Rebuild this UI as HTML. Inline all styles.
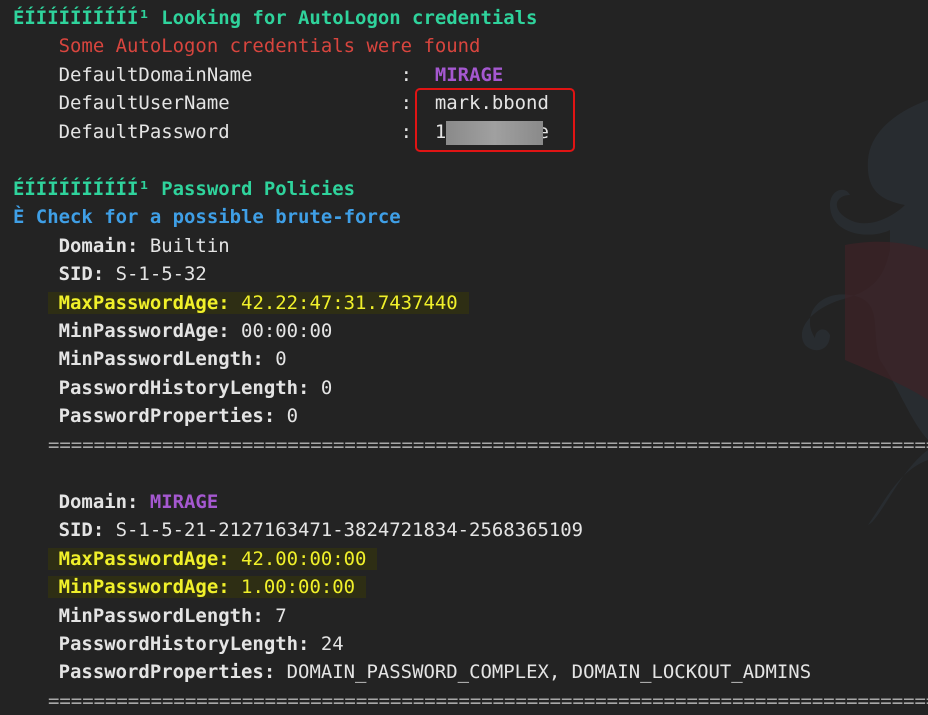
<!DOCTYPE html>
<html><head><meta charset="utf-8"><style>
html,body{margin:0;padding:0;background:#232323;width:928px;height:715px;overflow:hidden;position:relative}
.t{position:absolute;left:13px;top:4px;font-family:"DejaVu Sans Mono","Liberation Mono",monospace;font-size:18.95px;line-height:28.45px;color:#e4e4e4;white-space:pre;z-index:2}
.g{color:#2fd39c;font-weight:bold}
.r{color:#d8453e}
.p{color:#a558d0}
.b{color:#3f9fe6;font-weight:bold}
.w{font-weight:bold}
.y{color:#f0f02a}
.hl{background:#2e2e14;margin-left:-11px;padding:0 11px}
.eq{color:#a8a8a8;display:block;width:880px;overflow:hidden;margin-left:35px;letter-spacing:0}
</style></head><body>
<svg style="position:absolute;left:0;top:0;z-index:1" width="928" height="715">
<path d="M928 100 C900 110 870 130 868 160 C866 190 880 200 905 205 C895 215 870 230 850 220 C830 210 835 195 850 195 C845 185 830 190 830 205 C830 235 870 240 890 230 L890 250 C885 270 880 290 840 300 C810 310 795 330 805 345 C815 355 830 350 830 335 C825 325 815 330 815 338 C800 315 820 290 850 295 C885 300 870 330 880 360 C900 390 910 420 928 440 Z" fill="#35404a" opacity="0.35"/>
<path d="M845 245 C870 240 900 240 928 250 L928 400 C905 385 880 375 845 360 Z" fill="#3e2226" opacity="0.7"/>
<path d="M928 450 C900 470 880 520 868 525 C885 500 900 470 928 460 Z" fill="#35404a" opacity="0.35"/>
</svg>
<div style="position:absolute;left:415px;top:88px;width:156px;height:60px;border:2.5px solid #e01414;border-radius:5px;z-index:3"></div>
<div style="position:absolute;left:446px;top:121px;width:97px;height:24px;background:linear-gradient(90deg,#8a8a8a,#a0a0a0,#8a8a8a);z-index:3"></div>
<div class="t"><span class="g">ÉÍÍÍÍÍÍÍÍÍÍ¹ Looking for AutoLogon credentials</span>
    <span class="r">Some AutoLogon credentials were found</span>
    DefaultDomainName             :  <span class="p w">MIRAGE</span>
    DefaultUserName               :  mark.bbond
    DefaultPassword               :  1        e

<span class="g">ÉÍÍÍÍÍÍÍÍÍÍ¹ Password Policies</span>
<span class="b">È Check for a possible brute-force</span>
    <span class="w">Domain:</span> Builtin
    <span class="w">SID:</span> S-1-5-32
    <span class="y hl"><b>MaxPasswordAge:</b> 42.22:47:31.7437440</span>
    <span class="w">MinPasswordAge:</span> 00:00:00
    <span class="w">MinPasswordLength:</span> 0
    <span class="w">PasswordHistoryLength:</span> 0
    <span class="w">PasswordProperties:</span> 0
<span class="eq">=================================================================================</span>
    <span class="w">Domain:</span> <span class="p w">MIRAGE</span>
    <span class="w">SID:</span> S-1-5-21-2127163471-3824721834-2568365109
    <span class="y hl"><b>MaxPasswordAge:</b> 42.00:00:00</span>
    <span class="y hl"><b>MinPasswordAge:</b> 1.00:00:00</span>
    <span class="w">MinPasswordLength:</span> 7
    <span class="w">PasswordHistoryLength:</span> 24
    <span class="w">PasswordProperties:</span> DOMAIN_PASSWORD_COMPLEX, DOMAIN_LOCKOUT_ADMINS
<span class="eq">=================================================================================</span></div>
</body></html>
